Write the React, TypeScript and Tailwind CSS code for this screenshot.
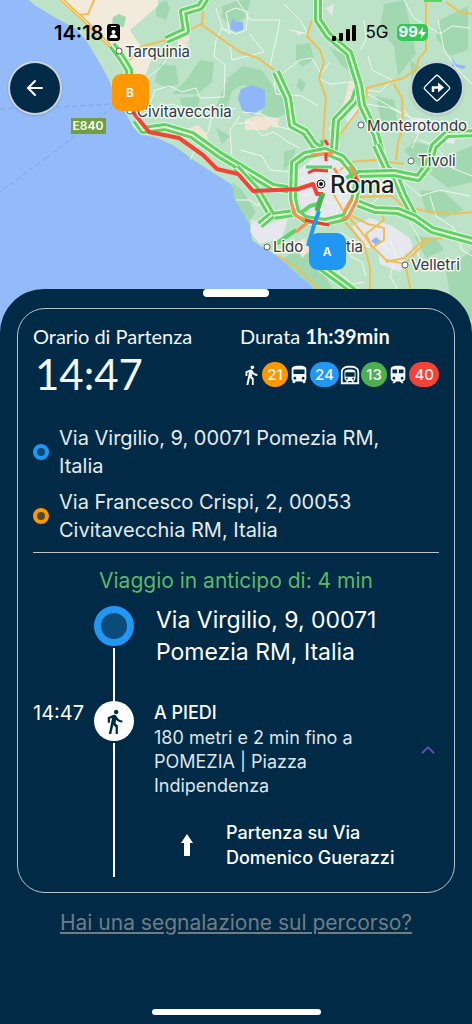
import { ArrowLeft, ChevronUp } from "lucide-react";
import {
  MdDirectionsBus,
  MdDirectionsWalk,
  MdOutlineSubway,
  MdTrain,
} from "react-icons/md";

const freeways = [
  "M207 -4L200 7L183 12L186 31L166 40",
  "M112 45L121 57L129 70L130 84",
  "M136 120L143 130L165 127L192 135L220 155L240 167L273 187L294 190",
  "M236 168L258 192L272 216L294 213",
  "M260 225L272 215",
  "M318 -4L318 20L328 35L349 53L359 85L354 101L336 120L334 150",
  "M359 85L362 105L376 135L384 165",
  "M376 145L387 169L394 173L403 195L415 218",
  "M357 174L394 173L418 178L428 165L434 146L447 134L476 133",
  "M357 203L375 210L398 211L415 218L432 230L476 242",
  "M276 72L288 98L292 125L305 132L314 145L322 150",
  "M322 268L340 281L360 296",
];

const ring =
  "M294 163L305 155L325 151L342 158L352 170L357 185L354 201L345 217L325 222L305 219L296 212L293 198Z";

const yellowRoads = [
  "M95 -2L88 14L79 15",
  "M130 60L140 47L170 39L192 29L201 24L220 38L240 52L258 58L274 70",
  "M204 0L202 24",
  "M312 20L307 36L320 50L324 62L319 78L326 98L324 122L323 150",
  "M426 0L426 50L418 60L417 68L404 78L382 84L367 88L366 100",
  "M360 108L342 132L334 140",
  "M394 84L402 98L403 128L398 142L396 160",
  "M446 2L460 12L474 14",
  "M331 190L344 212L360 230L372 246L386 260L405 264L416 252L427 240L443 238",
  "M352 216L368 224L384 228L384 240L372 248L366 234L384 220L380 208",
  "M360 197L392 196L403 206L430 212L452 214L474 212",
  "M345 222L364 244L370 268L370 292",
  "M405 264L411 292",
  "M278 256L298 268L322 292",
  "M386 262L404 258L426 238",
  "M340 170L350 162L376 160L404 164",
];

const whiteRoads = [
  "M150 104L155 90L170 86L182 92L196 88L200 98L224 97L225 65L214 56L216 40L222 28L216 8",
  "M222 28L230 34L226 12L236 8L248 12L246 30L236 34L222 28",
  "M144 80L160 68L174 50L190 44",
  "M236 -2L250 20L280 20L276 40L270 66",
  "M230 46L232 60L264 52L250 34",
  "M190 160L200 140L208 132L212 116L236 108",
  "M240 116L230 130L232 160",
  "M242 112L262 114L276 126L292 130",
  "M284 72L300 60L312 58L320 72",
  "M284 72L274 82L276 94L302 96L318 106",
  "M330 62L318 78L330 84L352 82",
  "M368 56L372 70L392 80L380 92L366 90",
  "M368 94L400 112L402 114",
  "M366 104L390 108L412 118L440 122",
  "M364 20L366 40L360 50",
  "M290 30L308 34L300 20L284 4",
  "M404 0L414 18L440 34L452 26L470 28",
  "M438 20L444 50L458 70L472 84",
  "M420 140L436 146L452 168L472 176",
  "M404 110L420 130L412 148",
  "M140 100L152 110L172 104L196 112L214 104",
  "M236 124L250 122L262 136L274 132L288 142L300 148",
  "M240 150L262 156L270 170L290 172",
  "M236 200L250 200L258 206L262 196",
  "M300 178L316 186L338 180L352 186",
  "M302 196L316 192L330 204L346 200",
  "M310 160L318 178L322 206L316 218",
  "M330 158L328 176L340 196L336 216",
  "M340 232L352 240L350 256L362 262L366 276",
  "M352 240L370 248L382 244L392 252",
  "M390 240L396 256L390 276L398 290",
  "M410 222L420 240L418 256L432 268",
  "M430 196L436 216L454 228L462 250L472 256",
  "M346 258L338 272L352 284L364 282",
  "M376 180L382 194L372 204",
  "M400 178L420 196L440 190L470 196",
];

const forests =
  "M156 6l10-6 4 8-4 12-10-4zM160 64l16 2 3 18-12 4-12-6zM200 60l14 2-2 20-14 12-26 0 14-14zM222 6l30-10-6 20-12 12-12-10zM180 98l20-2-2 12-16-2zM296 45l14-2 4 16-12 8-6-8zM300 78l6 6-4 8-6-6zM228 78l14-12 20 4 12 18 10 10 6 14-14 6-14-4-2-26-18-3-10 6-6 20-10-4zM330 48l18 8 12 22-18-12zM384 4l20-4 6 24 6 30-18 22-4-30-14-16zM440 20l28-14v44l-18 6-14-18zM410 60l20 14-8 24-10-16zM376 96l18 4 4 24-16 2zM404 150l10-8 18 4 8 20-16 6zM440 158l32-12v36l-24 6-18-14zM420 190l24 2 20 18-20 8-18-6zM232 182l10 8 14 22-8 10-14-24zM284 258l18-12 18 20 14 26h-16l-30-26zM446 270l26-20v70l-20-12zM284 152l12-4-4 14-8 8zM414 236l22 2 8 12-18 8zM216 128l14 8-8 8z";

const towns =
  "M298 170l16-12 22 0 14 16 2 24-12 16-22 6-16-8-6-26zM252 220l16 4 20-6-6 20-22 6-10-12zM352 226l18-8 22 8 18 12 4 14-24 4-26-10zM340 114l18-18 4 8-12 20zM326 8l8-4-2 12zM304 32l-6 4-2-4zM406 120l16-2 8 10-14 6zM440 132l16 2-2 10-14-2zM376 242l18-6 12 20-6 16-20-8z";

const casedLine = (d: string) => (
  <g key={d}>
    <path d={d} stroke="#e4f6e6" strokeWidth="10" />
    <path d={d} stroke="#5cd363" strokeWidth="8" />
    <path d={d} stroke="#e9f4d9" strokeWidth="2" />
  </g>
);

// "Lido di Ostia" runs under the A marker, only its two ends are lettered
const places = [
  { name: "Tarquinia", x: 125, y: 57 },
  { name: "Civitavecchia", x: 137, y: 117 },
  { name: "Monterotondo", x: 367, y: 131 },
  { name: "Tivoli", x: 418, y: 166 },
  { name: "Lido", x: 273, y: 252 },
  { name: "tia", x: 346, y: 252 },
  { name: "Velletri", x: 411, y: 270 },
];

const dots = [
  [119, 51],
  [130, 111],
  [361, 125],
  [411, 161],
  [267, 247],
  [405, 265],
];

const RouteMap = () => (
  <svg
    viewBox="0 0 472 336"
    preserveAspectRatio="xMidYMin slice"
    className="block h-full w-full font-['Inter',sans-serif]"
    fill="none"
    strokeLinejoin="round"
  >
    <rect width="472" height="336" fill="#93bbf9" />
    <path
      d="M26 -2L36 6L56 18L76 29L86 40L98 60L108 78L115 95L125 112L133 127L140 134L158 138L176 147L195 161L212 172L231 184L237 195L247 215L251 230L252 240L262 247L276 255L292 268L310 284L326 300L360 336H474V-2Z"
      fill="#bce3c8"
    />
    <path d={forests} fill="#a2d8b0" />
    <path
      d="M56 -2L84 22L108 44L124 66L134 84L146 74L152 58L138 42L130 30L158 6L158 -2Z"
      fill="#f2eadb"
    />
    <path d="M113 17l6-3 7 3-2 10-12-2z" fill="#a2d8b0" />
    <path
      d="M184 130l14-5 8 8 4 12-14-7zM245 120l12-4 22 2-1 10-8-2-3 4-22 0zM350 80l8 6-2 14-14 20-6 12-8-2 16-28zM296 244l8-6 6 12-8 8zM176 34l12-6 2 12-10 10z"
      fill="#f2e4d2"
    />
    <path d={towns} fill="#e6e8ed" />
    <path
      d="M238 98L241 89L252 85L265 90L265 107L252 115L242 110ZM230 29L231 21L234 18L236 22L243 22L243 30L236 32ZM452 58l4 6 10 2-2 3-12-3zM371 241l5-4 6 5-5 4z"
      fill="#8fb7f7"
    />
    <path
      d="M0 109L60 107L112 104M46 158L112 108M46 158L0 192"
      stroke="#7ea6ee"
      strokeDasharray="5 3"
    />
    <g stroke="#eef8ef" strokeWidth="1">
      {whiteRoads.map((d) => (
        <path key={d} d={d} />
      ))}
    </g>
    <g stroke="#f0be55" strokeWidth="2">
      {yellowRoads.map((d) => (
        <path key={d} d={d} />
      ))}
    </g>
    <path d="M60 -2L86 22L110 46" stroke="#f2bd4d" strokeWidth="4" />
    <path d="M60 -2L86 22L110 46" stroke="#fff3cf" strokeWidth="1" />
    {freeways.map(casedLine)}
    {casedLine(ring)}
    <path d="M424 0H442" stroke="#5cd363" strokeWidth="4" />
    <path
      d="M276 244L296 230M302 212L310 206L318 204M358 172L346 178"
      stroke="#5cd363"
      strokeWidth="4"
    />
    <path
      d="M311 155L333 153M350 166L358 180M357 199L349 216L342 219M352 198L344 212M291 202L296 216L306 220M296 232L308 222M334 168L340 178"
      stroke="#fb9250"
      strokeWidth="3"
    />
    <path d="M306 167L332 167M322 140V146" stroke="#5cd363" strokeWidth="3" />
    <path
      d="M308 173L314 170L328 171M305 220L329 225M325 140L328 145M326 153V161M355 177L358 182"
      stroke="#f23a35"
      strokeWidth="3"
    />
    <path
      d="M133 112L149 132L179 138L203 155L217 169L238 174L253 191L298 189L313 184L317 194L323 194"
      stroke="#f44336"
      strokeWidth="4"
    />
    <path d="M323 193L320 201L317 211" stroke="#4caf50" strokeWidth="5" />
    <path d="M319 211L314 225L308 246" stroke="#2196f3" strokeWidth="4" />

    <g fill="#fff" stroke="#5f6368" strokeWidth="1">
      {dots.map(([cx, cy]) => (
        <circle key={cx} cx={cx} cy={cy} r="3" />
      ))}
    </g>
    <circle cx="321" cy="184" r="4" fill="#fff" stroke="#111" strokeWidth="1" />
    <circle cx="321" cy="184" r="2" fill="#111" />
    <g
      fill="#35383d"
      stroke="#fff"
      strokeOpacity=".8"
      strokeWidth="3"
      paintOrder="stroke"
      fontSize="15"
    >
      {places.map((place) => (
        <text key={place.name} x={place.x} y={place.y}>
          {place.name}
        </text>
      ))}
      <text x="330" y="193" fontSize="24" fontWeight="500" fill="#1d1f22">
        Roma
      </text>
    </g>

    <rect x="71" y="118" width="35" height="16" fill="#6f9f41" />
    <g fill="#fff" fontWeight="600" fontSize="12" textAnchor="middle">
      <text x="88" y="130">E840</text>
      <rect x="112" y="74" width="37" height="37" rx="9" fill="#ff9800" />
      <text x="130" y="97">B</text>
      <rect x="309" y="233" width="37" height="37" rx="9" fill="#2196f3" />
      <text x="327" y="256">A</text>
    </g>
  </svg>
);

const StatusBar = () => (
  <div className="flex h-[61px] items-center justify-between pt-1 pr-11 pl-[54px] font-['Inter',sans-serif] text-black">
    <div className="flex items-center gap-1">
      <span className="text-[20px] font-semibold">14:18</span>
      <svg width="13" height="17" viewBox="0 0 13 17">
        <rect width="13" height="17" rx="3" />
        <rect x="4" y="2" width="5" height="1" fill="#fff" />
        <circle cx="6.5" cy="8" r="2" fill="#fff" />
        <path d="M2.5 14c0-5 8-5 8 0z" fill="#fff" />
      </svg>
    </div>
    <div className="flex items-center gap-2">
      <svg width="25" height="16" viewBox="0 0 25 16">
        <rect y="11" width="4" height="5" rx="1" />
        <rect x="7" y="8" width="4" height="8" rx="1" />
        <rect x="14" y="4" width="4" height="12" rx="1" />
        <rect x="20" width="4" height="16" rx="1" />
      </svg>
      <span className="text-[17px]">5G</span>
      <span className="flex h-[17px] items-center rounded-[5px] bg-[#34c759] px-[2px] text-[15px] font-bold text-white">
        99
        <svg width="8" height="12" viewBox="0 0 8 12" fill="#fff">
          <path d="M5 0L0 7h3.4L2.6 12 8 5H4.5z" />
        </svg>
      </span>
    </div>
  </div>
);

const pillClass =
  "flex h-[25px] items-center rounded-full px-[5px] text-[15px] font-medium";

const TripSummary = () => (
  <div className="grid grid-cols-2 font-['Lato',sans-serif] text-xl text-[#f4f6f7]">
    <div>
      <p className="leading-7">Orario di Partenza</p>
      <p className="pl-[2px] text-[42px] leading-[48px]">14:47</p>
    </div>
    <div className="pl-1">
      <p className="leading-7">
        Durata <b>1h:39min</b>
      </p>
      <div className="mt-3 flex items-center justify-between font-['Inter',sans-serif]">
        <MdDirectionsWalk size={22} className="shrink-0" />
        <span className={`${pillClass} bg-[#ff9800]`}>21</span>
        <MdDirectionsBus size={22} className="shrink-0" />
        <span className={`${pillClass} bg-[#2196f3]`}>24</span>
        <MdOutlineSubway size={22} className="shrink-0" />
        <span className={`${pillClass} bg-[#4caf50]`}>13</span>
        <MdTrain size={22} className="shrink-0" />
        <span className={`${pillClass} bg-[#f44336]`}>40</span>
      </div>
    </div>
  </div>
);

const Timeline = () => (
  <div className="grid grid-cols-[61px_40px_1fr]">
    <div className="col-start-2 flex flex-col items-center pt-[2px]">
      <div className="size-10 shrink-0 rounded-full border-[7px] border-[#2196f3] bg-[#0a4b7a]" />
      <div className="mt-[2px] w-[2px] flex-1 bg-white" />
    </div>
    <p className="pb-[33px] pl-[22px] text-[23px] leading-8">
      Via Virgilio, 9, 00071 Pomezia RM, Italia
    </p>

    <time className="text-[20px] leading-6">14:47</time>
    <div className="flex flex-col items-center">
      <div className="flex size-10 shrink-0 items-center justify-center rounded-full bg-white text-[#002a45]">
        <MdDirectionsWalk size={27} />
      </div>
      <div className="mt-[2px] w-[2px] flex-1 bg-white" />
    </div>
    <div className="pl-5">
      <div className="flex items-center justify-between">
        <div className="w-[220px] text-[18px] leading-6 text-[#dfe5e9]">
          <h2 className="pb-px font-medium text-white">A PIEDI</h2>
          <p>180 metri e 2 min fino a POMEZIA | Piazza Indipendenza</p>
        </div>
        <button aria-label="Chiudi dettagli" className="text-[#6a4bab]">
          <ChevronUp size={22} />
        </button>
      </div>
      <div className="flex items-center pt-[22px] pb-[7px] pl-[26px]">
        <svg width="14" height="24" viewBox="0 0 14 24" fill="#fff" className="shrink-0">
          <path d="M7 1l6 9h-3v13H4V10H1z" />
        </svg>
        <p className="pl-8 text-[18px] leading-[25px] font-medium">
          Partenza su Via Domenico Guerazzi
        </p>
      </div>
    </div>
  </div>
);

const roundButton =
  "flex size-[54px] items-center justify-center rounded-full border-2 border-white/80 bg-[#002a45] text-white shadow";

const App = () => {
  return (
    <main className="flex min-h-screen flex-col bg-[#002a45] font-['Inter',sans-serif] text-white">
      <div className="relative h-[336px] overflow-hidden">
        <RouteMap />
        <div className="absolute inset-x-0 top-0">
          <StatusBar />
          <div className="flex justify-between px-2">
            <button aria-label="Indietro" className={roundButton}>
              <ArrowLeft size={24} />
            </button>
            <button aria-label="Indicazioni" className={roundButton}>
              <svg width="30" height="30" viewBox="0 0 30 30" fill="none" stroke="#fff">
                <rect x="5.5" y="5.5" width="19" height="19" rx="2" transform="rotate(45 15 15)" strokeWidth="1.3" />
                <path d="M11 19v-4.5h6" strokeWidth="2.5" />
                <path d="M16 9.5l6 5-6 5z" fill="#fff" stroke="none" />
              </svg>
            </button>
          </div>
        </div>
      </div>

      <section className="relative -mt-[47px] flex flex-1 flex-col rounded-t-[44px] bg-[#002a45]">
        <div className="mx-auto h-2 w-[66px] rounded-full bg-white" />
        <div className="mx-[17px] mt-[11px] rounded-[28px] border border-[#b9c3ca] px-[15px] pt-[13px] pb-[15px]">
          <TripSummary />
          <div className="mt-[26px] space-y-2 border-b border-[#b9c3ca] pb-2 text-[20px] leading-7 text-[#e6ebee]">
            <div className="flex items-center gap-[10px] pr-6">
              <span className="size-4 shrink-0 rounded-full border-4 border-[#2196f3] bg-[#0a4b7a]" />
              <p>Via Virgilio, 9, 00071 Pomezia RM, Italia</p>
            </div>
            <div className="flex items-center gap-[10px] pr-6">
              <span className="size-4 shrink-0 rounded-full border-4 border-[#ff9800] bg-[#4d4a30]" />
              <p>Via Francesco Crispi, 2, 00053 Civitavecchia RM, Italia</p>
            </div>
          </div>
          <p className="pt-[14px] pb-[9px] text-center text-[21px] leading-7 text-[#5fb568]">
            Viaggio in anticipo di: 4 min
          </p>
          <Timeline />
        </div>
        <a
          href="#segnalazione"
          className="mt-4 text-center text-[21px] leading-7 text-[#717c84] underline underline-offset-2"
        >
          Hai una segnalazione sul percorso?
        </a>
        <div className="mx-auto mt-auto mb-[9px] h-[6px] w-[169px] rounded-full bg-white" />
      </section>
    </main>
  );
};

export default App;
